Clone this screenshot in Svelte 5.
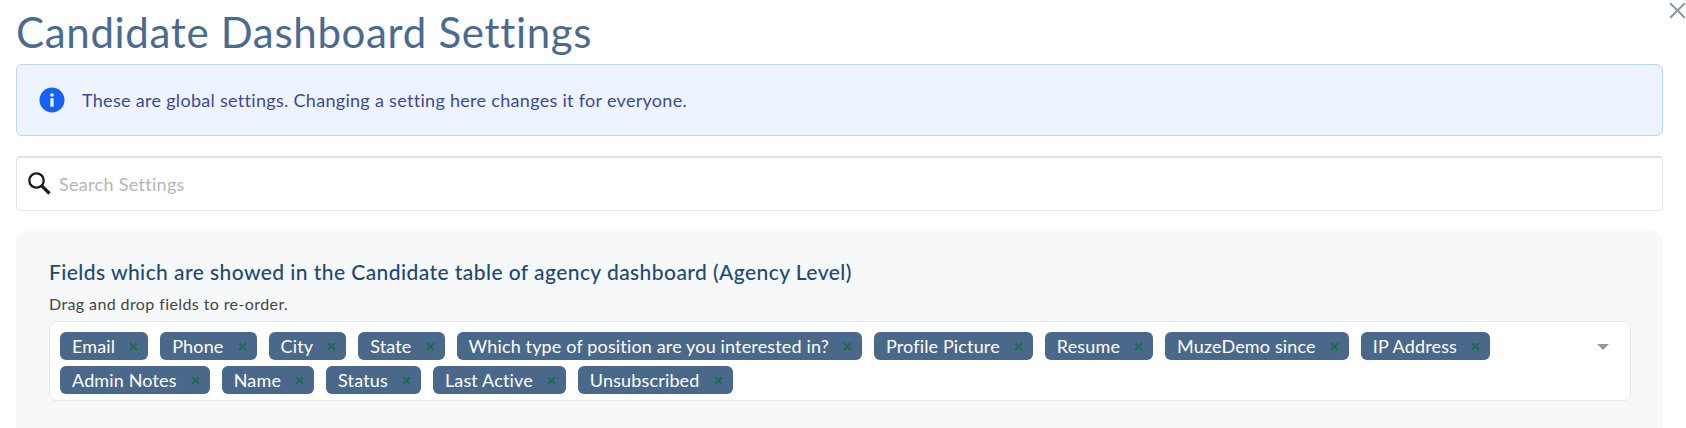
<script>
  const fields = [
    'Email', 'Phone', 'City', 'State', 'Which type of position are you interested in?',
    'Profile Picture', 'Resume', 'MuzeDemo since', 'IP Address',
    'Admin Notes', 'Name', 'Status', 'Last Active', 'Unsubscribed'
  ];
</script>

<div class="modal">
  <button class="close" aria-label="Close">
    <svg width="17" height="17" viewBox="0 0 17 17" fill="none">
      <path d="M1.2 1.2 15.8 15.8M15.8 1.2 1.2 15.8" stroke="#8d96a3" stroke-width="2"/>
    </svg>
  </button>

  <h1>Candidate Dashboard Settings</h1>

  <div class="alert">
    <svg class="info" width="26" height="26" viewBox="0 0 26 26">
      <circle cx="13" cy="13" r="12.5" fill="#1660fb"/>
      <circle cx="13" cy="8" r="1.8" fill="#fff"/>
      <rect x="11.4" y="11.2" width="3.2" height="8.6" rx="0.6" fill="#fff"/>
    </svg>
    <span>These are global settings. Changing a setting here changes it for everyone.</span>
  </div>

  <div class="search">
    <svg width="26" height="26" viewBox="0 0 26 26" fill="none">
      <circle cx="10.5" cy="10.5" r="7.2" stroke="#1c1c1e" stroke-width="2.3"/>
      <path d="M15.8 15.8 23.5 23.5" stroke="#1c1c1e" stroke-width="3.2"/>
    </svg>
    <input type="text" placeholder="Search Settings" />
  </div>

  <section class="panel">
    <h2>Fields which are showed in the Candidate table of agency dashboard (Agency Level)</h2>
    <p>Drag and drop fields to re-order.</p>
    <div class="select">
      <div class="chips">
        {#each fields as field}
          <span class="chip">
            {field}
            <svg width="9" height="9" viewBox="0 0 9 9" fill="none">
              <path d="M1.2 1.2 7.8 7.8M7.8 1.2 1.2 7.8" stroke="#1f6b4a" stroke-width="2"/>
            </svg>
          </span>
        {/each}
      </div>
      <span class="caret"></span>
    </div>
  </section>
</div>

<style>
  :global(body) { background: #fff; overflow: hidden; }
  .modal {
    position: relative;
    height: 428px;
    overflow: hidden;
    box-sizing: border-box;
    padding: 0 23px 0 16px;
    font-family: Lato, "Noto Sans", sans-serif;
  }
  .close {
    position: absolute;
    top: 2px;
    right: 0;
    padding: 0;
    border: 0;
    background: none;
    line-height: 0;
  }
  h1 {
    margin: 0;
    padding-top: 9px;
    height: 46px;
    font-size: 42px;
    line-height: 46px;
    font-weight: 400;
    letter-spacing: 0.68px;
    color: #4a6a8f;
  }
  .alert {
    display: flex;
    align-items: center;
    gap: 17px;
    height: 72px;
    margin-top: 9px;
    padding-left: 22px;
    box-sizing: border-box;
    background: #edf4ff;
    border: 1px solid #b9d6fb;
    border-radius: 6px;
    color: #3a4a98;
    font-size: 18px;
    letter-spacing: 0.3px;
  }
  .search {
    display: flex;
    align-items: center;
    gap: 7px;
    height: 55px;
    margin-top: 20px;
    padding-left: 9px;
    box-sizing: border-box;
    border: 1px solid #e6e6e6;
    border-top: 2px solid #e2e2e2;
    border-radius: 4px;
  }
  .search svg { margin-top: -3px; }
  .search input {
    flex: 1;
    border: 0;
    outline: 0;
    padding: 0;
    font: inherit;
    font-size: 18px;
    letter-spacing: 0.3px;
    color: #333;
  }
  .search input::placeholder { color: #b5b5b5; opacity: 1; }
  .panel {
    margin-top: 20px;
    height: 220px;
    padding: 29px 32px 0 33px;
    box-sizing: border-box;
    background: #f7f8fa;
    border-radius: 12px;
  }
  h2 {
    margin: 0;
    font-size: 21px;
    line-height: 24px;
    font-weight: 500;
    letter-spacing: 0.43px;
    color: #1d4a72;
  }
  p {
    margin: 10px 0 0;
    font-size: 16px;
    line-height: 20px;
    letter-spacing: 0.4px;
    color: #444;
  }
  .select {
    display: flex;
    justify-content: space-between;
    margin-top: 7px;
    height: 80px;
    padding: 10px 21px 0 10px;
    box-sizing: border-box;
    background: #fff;
    border: 1px solid #e6e8eb;
    border-radius: 7px;
  }
  .chips {
    display: flex;
    flex-wrap: wrap;
    align-content: flex-start;
    gap: 6px 12px;
    width: 1440px;
  }
  .chip {
    display: flex;
    align-items: center;
    justify-content: space-between;
    gap: 14px;
    height: 28px;
    padding: 0 10px 0 12px;
    box-sizing: border-box;
    background: #4a6889;
    border-radius: 6px;
    color: #fff;
    font-size: 18px;
    letter-spacing: 0.15px;
  }
  .caret {
    width: 0;
    height: 0;
    margin-top: 12px;
    border-left: 6px solid transparent;
    border-right: 6px solid transparent;
    border-top: 6px solid #999;
  }
</style>
